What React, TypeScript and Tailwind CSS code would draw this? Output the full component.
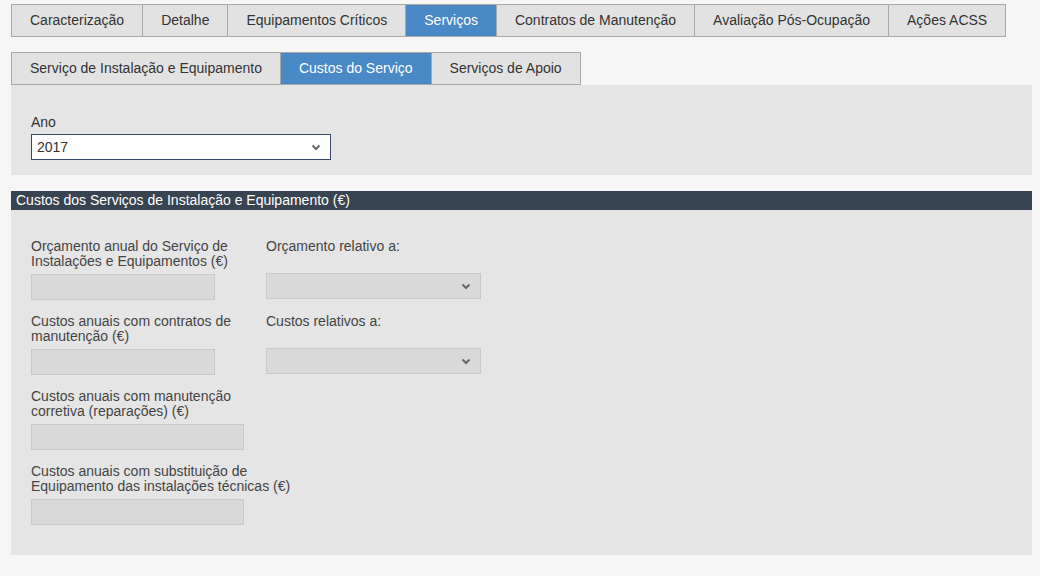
import { useState } from "react"

const mainTabs = [
  "Caracterização",
  "Detalhe",
  "Equipamentos Críticos",
  "Serviços",
  "Contratos de Manutenção",
  "Avaliação Pós-Ocupação",
  "Ações ACSS",
]

const subTabs = ["Serviço de Instalação e Equipamento", "Custos do Serviço", "Serviços de Apoio"]

export default function App() {
  const [tab, setTab] = useState("Serviços")
  const [subTab, setSubTab] = useState("Custos do Serviço")

  return (
    <div className="min-h-[576px] bg-[#f6f6f6] pl-[11px] pr-2 pt-1 font-['Liberation_Sans',Arial,sans-serif] text-[14px] text-[#333]">
      <TabRow items={mainTabs} active={tab} onSelect={setTab} />
      <div className="mt-[15px]">
        <TabRow items={subTabs} active={subTab} onSelect={setSubTab} />
      </div>

      <section className="bg-[#e5e5e5] px-5 pb-[15px] pt-[29px]">
        <label className="block leading-[16px]">Ano</label>
        <FakeSelect value="2017" className="mt-[4px] w-[300px] border-[#3a4668] bg-white" />
      </section>

      <div className="mt-4 flex h-[19px] items-center bg-[#384452] px-[5px] text-[14px] text-white">
        Custos dos Serviços de Instalação e Equipamento (€)
      </div>

      <section className="bg-[#e5e5e5] px-5 pb-[30px] pt-[29px]">
        <div className="flex gap-[51px]">
          <div className="w-[184px]">
            <FieldLabel lines={["Orçamento anual do Serviço de", "Instalações e Equipamentos (€)"]} />
            <TextBox className="w-[184px]" />
          </div>
          <div>
            <FieldLabel lines={["Orçamento relativo a:"]} />
            <FakeSelect value="" className="mt-[4px] w-[215px] border-[#c9c9c9] bg-[#d9d9d9]" />
          </div>
        </div>

        <div className="mt-[14px] flex gap-[51px]">
          <div className="w-[184px]">
            <FieldLabel lines={["Custos anuais com contratos de", "manutenção (€)"]} />
            <TextBox className="w-[184px]" />
          </div>
          <div>
            <FieldLabel lines={["Custos relativos a:"]} />
            <FakeSelect value="" className="mt-[4px] w-[215px] border-[#c9c9c9] bg-[#d9d9d9]" />
          </div>
        </div>

        <div className="mt-[14px]">
          <FieldLabel lines={["Custos anuais com manutenção", "corretiva (reparações) (€)"]} />
          <TextBox className="w-[213px]" />
        </div>

        <div className="mt-[14px]">
          <FieldLabel lines={["Custos anuais com substituição de", "Equipamento das instalações técnicas (€)"]} />
          <TextBox className="w-[213px]" />
        </div>
      </section>
    </div>
  )
}

function TabRow({ items, active, onSelect }: { items: string[]; active: string; onSelect: (v: string) => void }) {
  return (
    <div className="flex">
      {items.map((item, i) => (
        <button
          key={item}
          onClick={() => onSelect(item)}
          className={
            "h-[33px] border border-[#a9a9a9] px-[18px] leading-[31px] " +
            (i > 0 ? "-ml-px " : "") +
            (item === active ? "relative z-10 border-[#4a89c8] bg-[#4a89c8] text-white" : "bg-[#e2e2e2] text-[#333]")
          }
        >
          {item}
        </button>
      ))}
    </div>
  )
}

function FieldLabel({ lines }: { lines: string[] }) {
  return (
    <div className="h-[30px] leading-[15px] text-[#444]">
      {lines.map((l) => (
        <div key={l} className="whitespace-nowrap">
          {l}
        </div>
      ))}
    </div>
  )
}

function TextBox({ className }: { className: string }) {
  return <div className={"mt-[5px] h-[26px] border border-[#c9c9c9] bg-[#d9d9d9] " + className} />
}

function FakeSelect({ value, className }: { value: string; className: string }) {
  return (
    <div className={"flex h-[26px] items-center justify-between border pl-[5px] pr-[9px] " + className}>
      <span className="text-[14px] text-[#333]">{value}</span>
      <svg width="10" height="7" viewBox="0 0 10 7" className="text-[#666]">
        <path d="M1.5 1.5 L5 5 L8.5 1.5" fill="none" stroke="currentColor" strokeWidth="2" />
      </svg>
    </div>
  )
}
